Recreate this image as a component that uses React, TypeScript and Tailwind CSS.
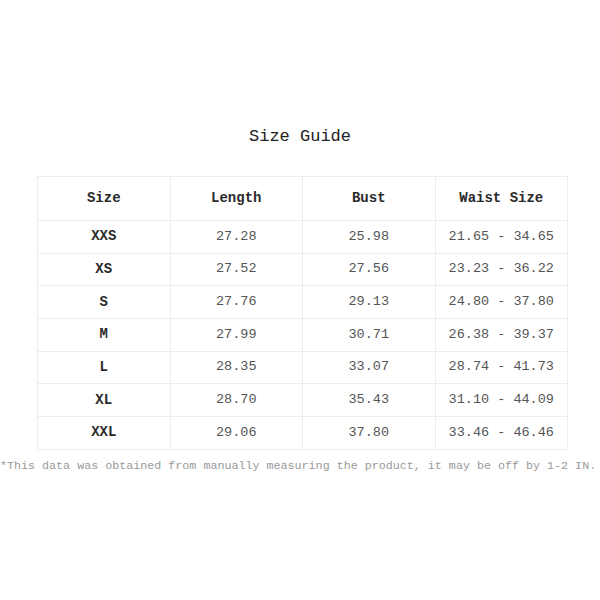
const rows = [
  ['XXS', '27.28', '25.98', '21.65 - 34.65'],
  ['XS', '27.52', '27.56', '23.23 - 36.22'],
  ['S', '27.76', '29.13', '24.80 - 37.80'],
  ['M', '27.99', '30.71', '26.38 - 39.37'],
  ['L', '28.35', '33.07', '28.74 - 41.73'],
  ['XL', '28.70', '35.43', '31.10 - 44.09'],
  ['XXL', '29.06', '37.80', '33.46 - 46.46'],
];

const headers = ['Size', 'Length', 'Bust', 'Waist Size'];

export default function App() {
  return (
    <div className="w-[600px] h-[600px] bg-white pt-[125px] font-['Liberation_Mono',monospace]">
      <h1 className="text-center text-[17px] leading-[24px] text-[#222]">Size Guide</h1>
      <table className="mt-[27px] ml-[37px] w-[531px] border-collapse table-fixed">
        <thead>
          <tr className="h-[44px]">
            {headers.map(h => (
              <th key={h} className="border border-[#ececec] text-[14px] font-bold text-[#2a2a2a]">{h}</th>
            ))}
          </tr>
        </thead>
        <tbody>
          {rows.map(r => (
            <tr key={r[0]} className="h-[32.7px]">
              <td className="border border-[#ececec] text-center text-[14px] font-bold text-[#2a2a2a]">{r[0]}</td>
              <td className="border border-[#ececec] text-center text-[13.5px] text-[#555]">{r[1]}</td>
              <td className="border border-[#ececec] text-center text-[13.5px] text-[#555]">{r[2]}</td>
              <td className="border border-[#ececec] text-center text-[13.5px] text-[#555]">{r[3]}</td>
            </tr>
          ))}
        </tbody>
      </table>
      <p className="mt-[8px] whitespace-nowrap text-[11.7px] leading-[16px] text-[#999]">
        *This data was obtained from manually measuring the product, it may be off by 1-2 IN.
      </p>
    </div>
  );
}
